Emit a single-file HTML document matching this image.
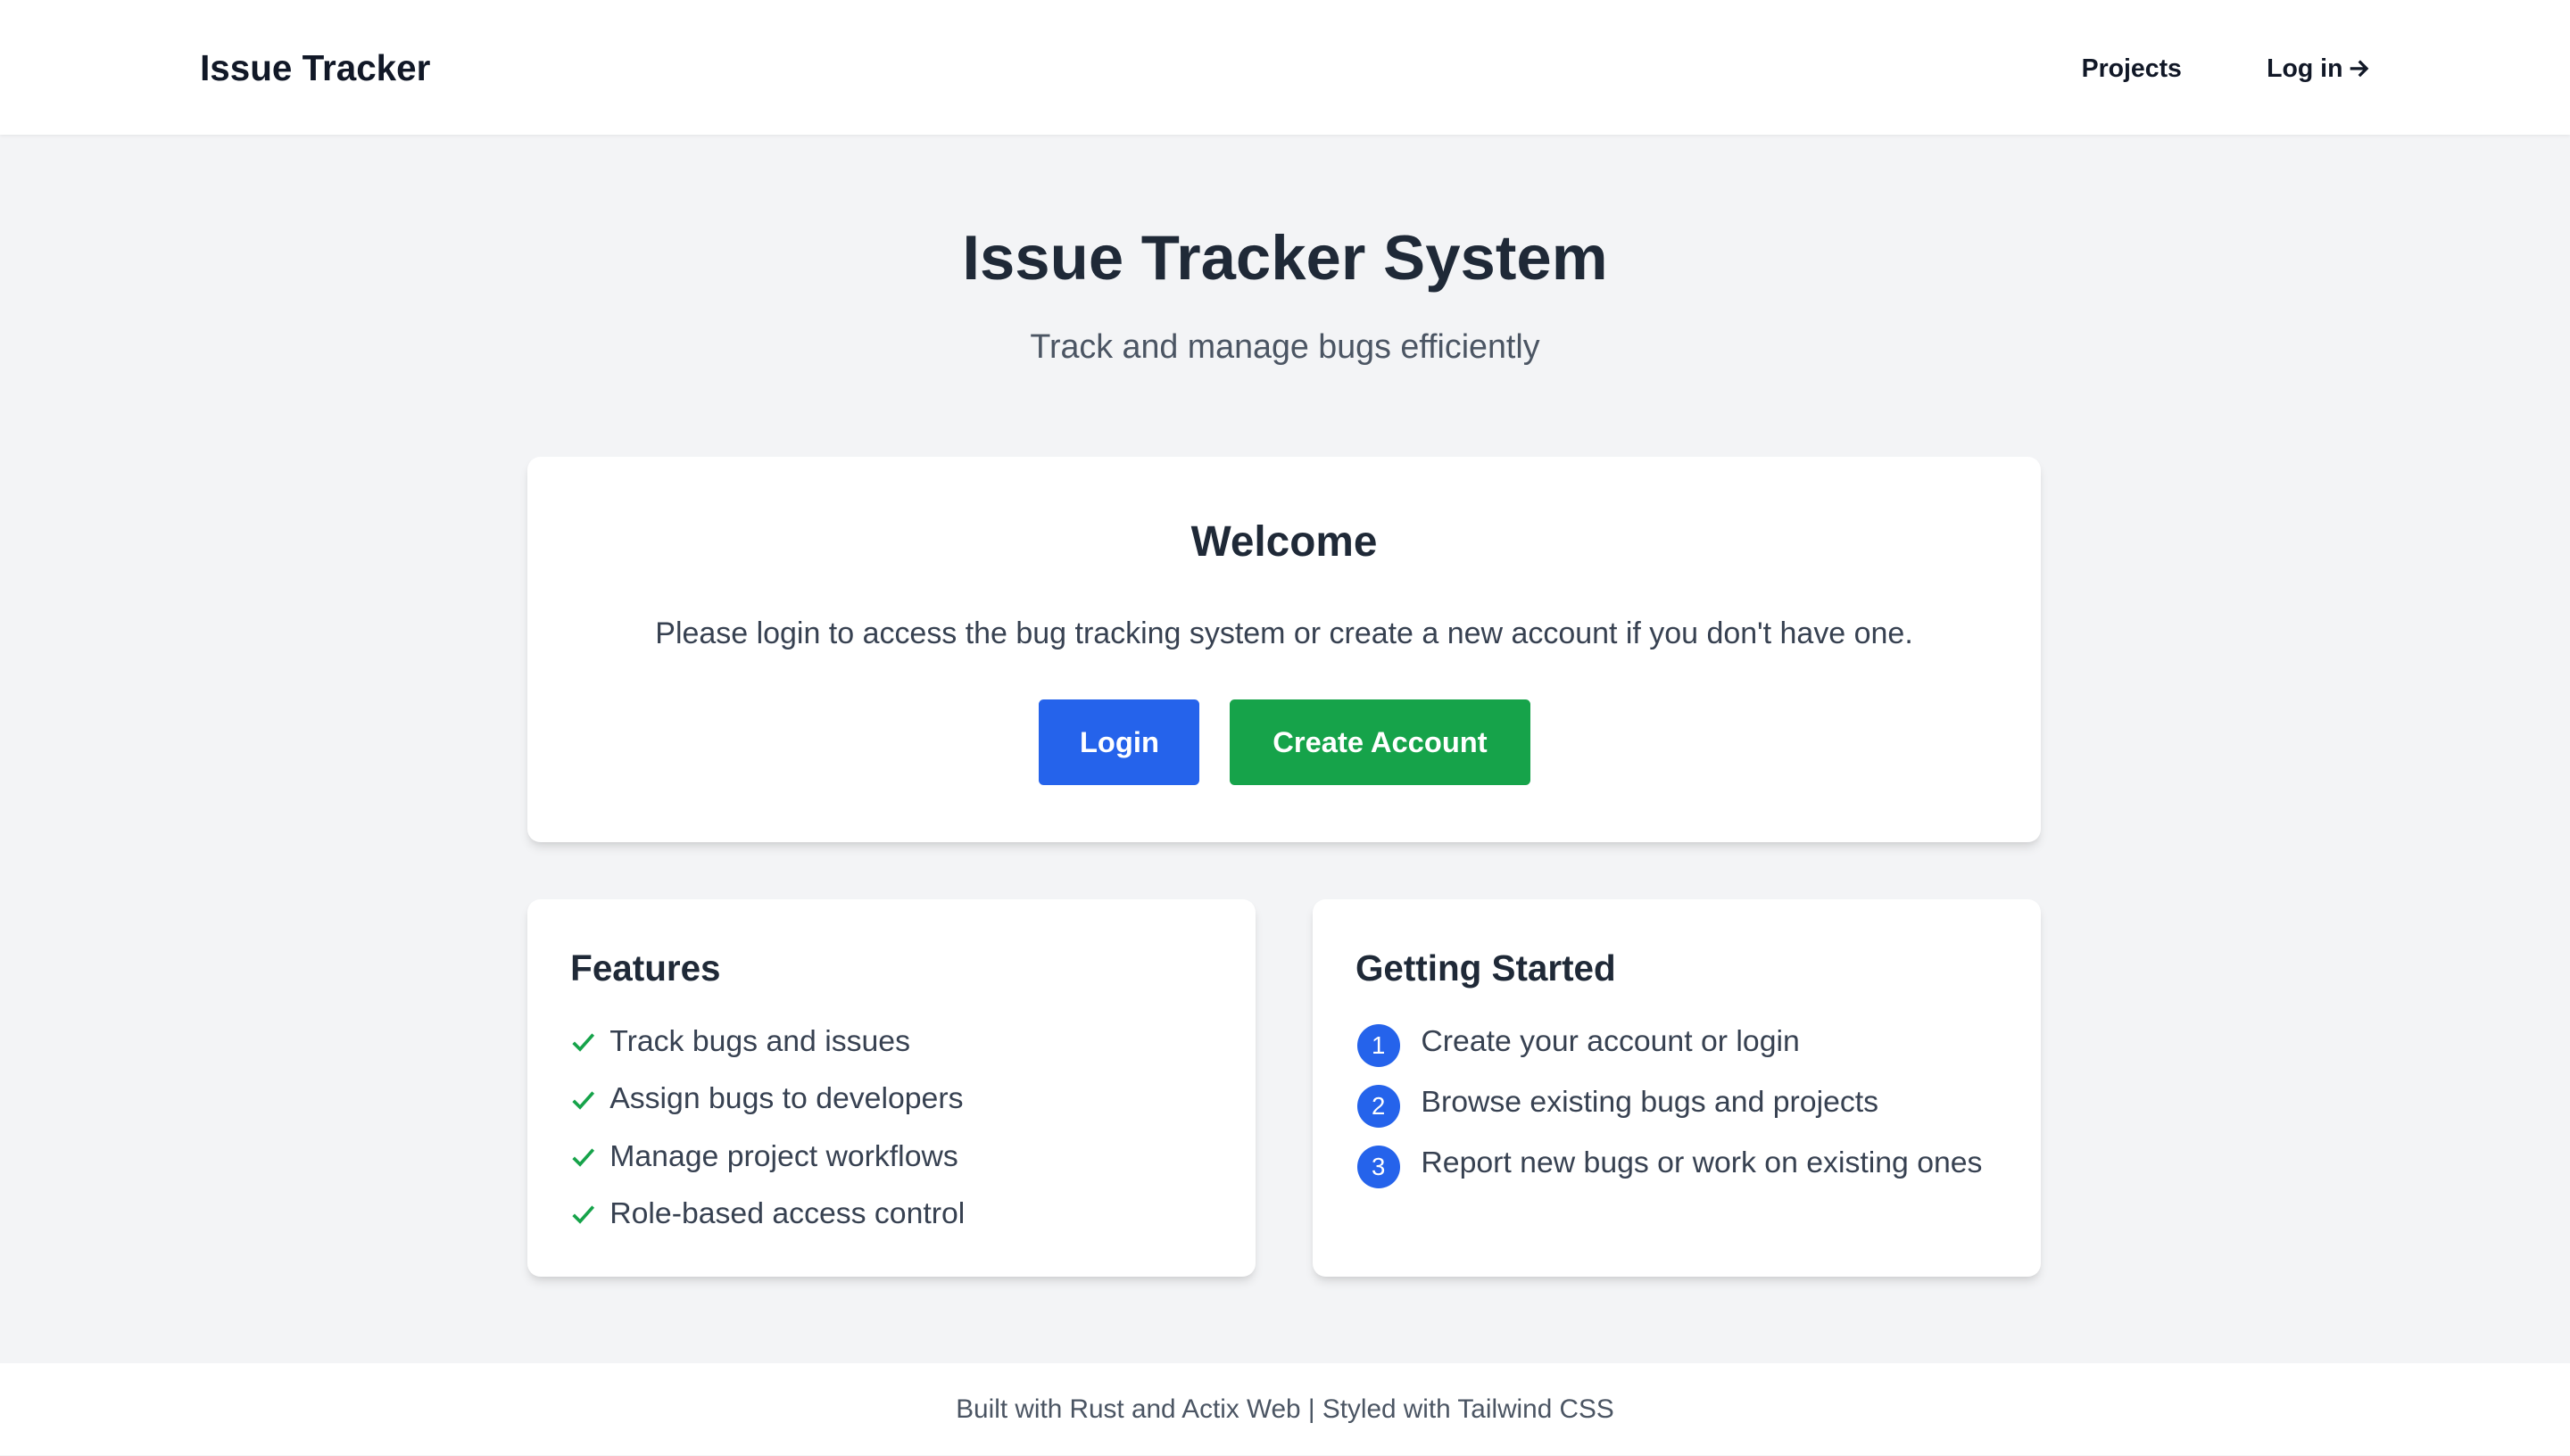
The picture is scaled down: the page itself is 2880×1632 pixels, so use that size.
<!DOCTYPE html>
<html><head><meta charset="utf-8"><style>
html,body{margin:0;padding:0;width:2880px;height:1632px;overflow:hidden;background:#f3f4f6}
#w{zoom:1.8367;width:1568px;height:888px;position:relative;font-family:"Liberation Sans",Arial,sans-serif;color:#1f2937}
.a{position:absolute;white-space:nowrap}
header{position:absolute;left:0;top:0;width:1568px;height:82px;background:#fff;box-shadow:0 1px 2px rgba(0,0,0,.06)}
.card{position:absolute;background:#fff;border-radius:8px;box-shadow:0 4px 6px -1px rgba(0,0,0,.1),0 2px 4px -2px rgba(0,0,0,.1)}
.c{text-align:center}
.btn{position:absolute;border-radius:3px;color:#fff;font-weight:bold;font-size:17.8px;text-align:center;line-height:52px}
.li{position:absolute;font-size:18.4px;color:#374151;white-space:nowrap}
.num{position:absolute;width:26px;height:26px;border-radius:50%;background:#2563eb;color:#fff;font-size:15px;text-align:center;line-height:26px}
footer{position:absolute;left:0;top:832px;width:1568px;height:56px;background:#fff}
</style></head><body><div id="w">
<header>
<div class="a" style="left:122px;top:29px;font-size:22px;font-weight:bold;color:#111827">Issue Tracker</div>
<div class="a" style="left:1270px;top:33px;font-size:15.5px;font-weight:bold;color:#111827">Projects</div>
<div class="a" style="left:1383px;top:33px;font-size:15.5px;font-weight:bold;color:#111827">Log in</div>
<svg class="a" style="left:1432px;top:35px" width="14" height="14" viewBox="0 0 14 14"><path d="M2 7h10M7.5 2.5L12 7l-4.5 4.5" fill="none" stroke="#111827" stroke-width="1.8"/></svg>
</header>
<div class="a c" style="left:0;width:1568px;top:135px;font-size:38.5px;font-weight:bold;color:#1f2937">Issue Tracker System</div>
<div class="a c" style="left:0;width:1568px;top:200px;font-size:20.5px;color:#4b5563">Track and manage bugs efficiently</div>

<div class="card" style="left:322px;top:279px;width:923px;height:235px">
<div class="a c" style="left:0;width:923px;top:37px;font-size:26px;font-weight:bold;color:#1f2937">Welcome</div>
<div class="a c" style="left:0;width:923px;top:97px;font-size:18.5px;color:#374151">Please login to access the bug tracking system or create a new account if you don't have one.</div>
<div class="btn" style="left:312px;top:148px;width:98px;height:52px;background:#2563eb">Login</div>
<div class="btn" style="left:428px;top:148px;width:184px;height:52px;background:#16a34a">Create Account</div>
</div>

<div class="card" style="left:322px;top:549px;width:444px;height:230px">
<div class="a" style="left:26px;top:29px;font-size:22px;font-weight:bold;color:#1f2937">Features</div>
<svg class="a" style="left:26px;top:80px" width="16" height="14" viewBox="0 0 16 14"><path d="M2 7.5l4 4 8-9" fill="none" stroke="#16a34a" stroke-width="2"/></svg>
<div class="li" style="left:50px;top:76px">Track bugs and issues</div>
<svg class="a" style="left:26px;top:115px" width="16" height="14" viewBox="0 0 16 14"><path d="M2 7.5l4 4 8-9" fill="none" stroke="#16a34a" stroke-width="2"/></svg>
<div class="li" style="left:50px;top:111px">Assign bugs to developers</div>
<svg class="a" style="left:26px;top:150px" width="16" height="14" viewBox="0 0 16 14"><path d="M2 7.5l4 4 8-9" fill="none" stroke="#16a34a" stroke-width="2"/></svg>
<div class="li" style="left:50px;top:146px">Manage project workflows</div>
<svg class="a" style="left:26px;top:185px" width="16" height="14" viewBox="0 0 16 14"><path d="M2 7.5l4 4 8-9" fill="none" stroke="#16a34a" stroke-width="2"/></svg>
<div class="li" style="left:50px;top:181px">Role-based access control</div>
</div>

<div class="card" style="left:801px;top:549px;width:444px;height:230px">
<div class="a" style="left:26px;top:29px;font-size:22px;font-weight:bold;color:#1f2937">Getting Started</div>
<div class="num" style="left:27px;top:76px">1</div>
<div class="li" style="left:66px;top:76px">Create your account or login</div>
<div class="num" style="left:27px;top:113px">2</div>
<div class="li" style="left:66px;top:113px">Browse existing bugs and projects</div>
<div class="num" style="left:27px;top:150px">3</div>
<div class="li" style="left:66px;top:150px">Report new bugs or work on existing ones</div>
</div>

<footer><div class="a c" style="left:0;width:1568px;top:19px;font-size:16.2px;color:#4b5563">Built with Rust and Actix Web | Styled with Tailwind CSS</div></footer>
</div></body></html>
